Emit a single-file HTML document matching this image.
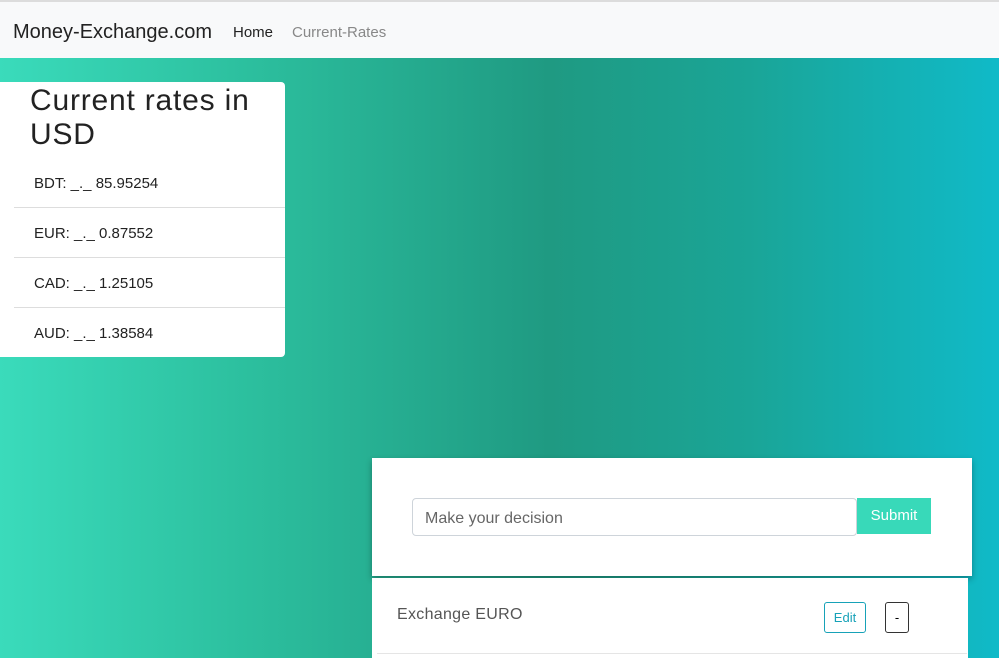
<!DOCTYPE html>
<html><head><style>
*{box-sizing:border-box;margin:0;padding:0}
body{width:999px;height:658px;overflow:hidden;font-family:"Liberation Sans",sans-serif;background:linear-gradient(to right,#3adbbb 0%,#2cbf9e 25%,#1f9a82 55%,#1aa597 75%,#10bac8 100%);position:relative}
.nav{position:absolute;left:0;top:0;width:999px;height:58px;background:#f8f9fa;border-top:2px solid #dcdcdc}
.brand{position:absolute;left:13px;top:19px;font-size:20px;color:#222}
.l1{position:absolute;left:233px;top:22px;font-size:15px;color:#222}
.l2{position:absolute;left:292px;top:22px;font-size:15px;color:#888}
.card{position:absolute;left:0;top:82px;width:285px;height:275px;background:#fff;border-radius:0 4px 4px 0}
.card h1{position:absolute;left:30px;top:2px;font-size:30px;letter-spacing:0.8px;font-weight:normal;line-height:34px;color:#222}
.row{position:absolute;left:14px;width:271px;height:50px;border-top:1px solid #ddd;font-size:15px;color:#222;padding:17px 0 0 20px}
.box{position:absolute;left:372px;top:458px;width:600px;height:118px;background:#fff;box-shadow:0 3px 6px rgba(0,0,0,.3)}
.inp{position:absolute;left:40px;top:40px;width:445px;height:38px;border:1px solid #ced4da;border-radius:4px;font-size:16px;color:#666;padding:11px 12px}
.sub{position:absolute;left:485px;top:40px;width:74px;height:36px;background:#38d9b9;color:#fff;font-size:15px;text-align:center;line-height:36px}
.list{position:absolute;left:372px;top:578px;width:596px;height:80px;background:#fff}
.ex{position:absolute;left:25px;top:28px;font-size:16px;color:#555;letter-spacing:0.3px}
.edit{position:absolute;left:452px;top:24px;width:42px;height:31px;border:1px solid #17a2b8;border-radius:3px;color:#17a2b8;font-size:13px;text-align:center;line-height:29px}
.dash{position:absolute;left:513px;top:24px;width:24px;height:31px;border:1px solid #333;border-radius:3px;font-size:13px;text-align:center;line-height:29px}
.line{position:absolute;left:5px;top:75px;width:590px;height:1px;background:#e5e5e5}
</style></head><body>
<div class="nav"><div class="brand">Money-Exchange.com</div><div class="l1">Home</div><div class="l2">Current-Rates</div></div>
<div class="card"><h1>Current rates in<br>USD</h1>
<div class="row" style="top:76px;border-top:none">BDT: _._ 85.95254</div>
<div class="row" style="top:125px">EUR: _._ 0.87552</div>
<div class="row" style="top:175px">CAD: _._ 1.25105</div>
<div class="row" style="top:225px">AUD: _._ 1.38584</div>
</div>
<div class="box"><div class="inp">Make your decision</div><div class="sub">Submit</div></div>
<div class="list"><div class="ex">Exchange EURO</div><div class="edit">Edit</div><div class="dash">-</div><div class="line"></div></div>
</body></html>
